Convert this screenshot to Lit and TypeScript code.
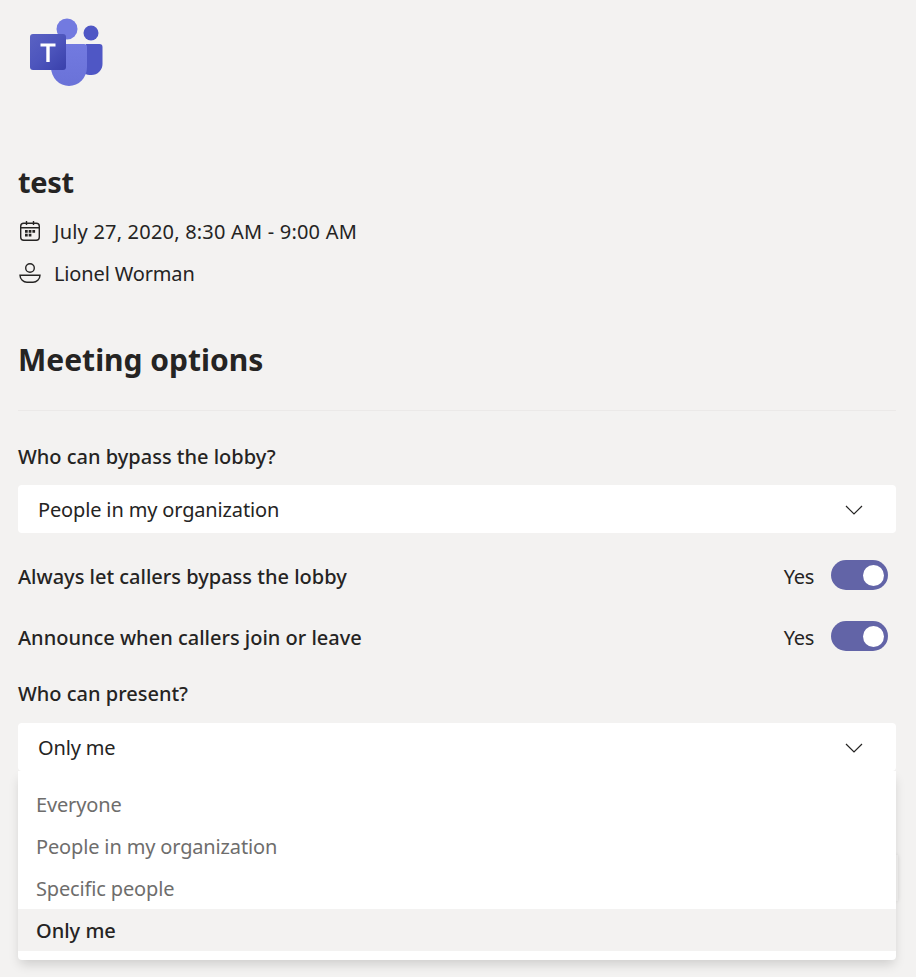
import { LitElement, html, css, svg } from "lit";
import { customElement } from "lit/decorators.js";

const logo = svg`<svg class="logo" width="75" height="70" viewBox="0 0 75 70">
  <defs>
    <linearGradient id="tile" x1="0" y1="0" x2="1" y2="1">
      <stop offset="0" stop-color="#5a62c3" />
      <stop offset="0.5" stop-color="#4d55bd" />
      <stop offset="1" stop-color="#3940ab" />
    </linearGradient>
    <linearGradient id="body" x1="0" y1="0" x2="0" y2="1">
      <stop offset="0" stop-color="#727ae0" />
      <stop offset="1" stop-color="#6a72d8" />
    </linearGradient>
  </defs>
  <circle cx="39" cy="11" r="10.5" fill="#727ae0" />
  <circle cx="63" cy="15" r="7.5" fill="#4f57c5" />
  <path d="M58 26h13.500a3 3 0 0 1 3 3v17a11 11 0 0 1-11 11c-3 0-5-.5-7-1.500z" fill="#4f57c5" />
  <path d="M23 26h33a3 3 0 0 1 3 3v20a18 19 0 0 1-36 0z" fill="url(#body)" />
  <rect x="2" y="16" width="36" height="36" rx="3" fill="url(#tile)" />
  <path d="M12.500 25.500h15v3h-5.800v15.500h-3.400v-15.500h-5.800z" fill="#fff" />
</svg>`;

const calendar = svg`<svg width="22" height="22" viewBox="0 0 22 22" fill="none" stroke="#252423" stroke-width="1.4">
  <rect x="1.700" y="3.200" width="18.600" height="17" rx="3" />
  <path d="M1.700 7.800h18.600M7.500 1v4M14.500 1v4" />
  <path d="M6 10h2.700v2.700h-2.700zM9.700 10h2.700v2.700h-2.700zM13.400 10h2.700v2.700h-2.700zM6 13.800h2.700v2.700h-2.700zM9.700 13.800h2.700v2.700h-2.700z" fill="#252423" stroke="none" />
</svg>`;

const person = svg`<svg width="22" height="22" viewBox="0 0 22 22" fill="none" stroke="#252423" stroke-width="1.4">
  <circle cx="11" cy="6" r="4.300" />
  <path d="M1 13.200h20c0 4-3.500 7-7 7h-6c-3.500 0-7-3-7-7z" />
</svg>`;

const chevron = svg`<svg width="18" height="10" viewBox="0 0 18 10" fill="none" stroke="#252423" stroke-width="1.2">
  <path d="M1 1l8 8 8-8" />
</svg>`;

@customElement("app-root")
export class AppRoot extends LitElement {
  static styles = css`
    :host {
      display: block;
      position: relative;
      height: 977px;
      overflow: hidden;
      background: #f3f2f1;
      color: #252423;
      font-family: "Noto Sans", "Open Sans", sans-serif;
      font-size: 20px;
      letter-spacing: -0.15px;
    }
    .page {
      display: flex;
      flex-direction: column;
      padding: 18px 20px 0 18px;
    }
    .logo {
      display: block;
      margin-left: 10px;
    }
    h1 {
      margin: 74px 0 0;
      font-size: 29px;
      line-height: 40px;
      font-weight: 700;
      letter-spacing: -0.3px;
    }
    .meta {
      display: flex;
      align-items: center;
      gap: 13px;
      height: 42px;
      padding-left: 1px;
    }
    .meta.first {
      margin-top: 8px;
    }
    .date {
      letter-spacing: 0.2px;
    }
    h2 {
      margin: 45px 0 0;
      font-size: 30px;
      line-height: 42px;
      font-weight: 700;
      letter-spacing: 0;
    }
    .divider {
      height: 1px;
      margin-top: 29px;
      background: #ebe9e8;
    }
    .label {
      font-weight: 500;
      line-height: 28px;
      letter-spacing: 0;
    }
    .label.lobby {
      margin-top: 32px;
    }
    .label.present {
      margin-top: 14px;
    }
    .select {
      position: relative;
      z-index: 1;
      display: flex;
      align-items: center;
      justify-content: space-between;
      height: 48px;
      padding: 0 33px 0 20px;
      background: #fff;
      border-radius: 4px;
    }
    .select span {
      padding-top: 1px;
    }
    .select svg {
      margin-top: 2px;
    }
    .select.first {
      margin-top: 14px;
      margin-bottom: 12px;
    }
    .select.open {
      margin-top: 15px;
    }
    .row {
      display: flex;
      align-items: center;
      justify-content: space-between;
      height: 60px;
      font-weight: 500;
      letter-spacing: 0;
    }
    .row + .row {
      margin-top: 1px;
    }
    .row span {
      padding-top: 2px;
    }
    .state {
      display: flex;
      align-items: center;
      gap: 17px;
      padding-right: 8px;
      font-weight: 400;
      letter-spacing: -0.35px;
    }
    .state span {
      padding-top: 2px;
    }
    .toggle {
      display: flex;
      align-items: center;
      justify-content: flex-end;
      width: 57px;
      height: 30px;
      padding-right: 4px;
      box-sizing: border-box;
      border-radius: 15px;
      background: #6264a7;
    }
    .knob {
      width: 21px;
      height: 21px;
      border-radius: 50%;
      background: #fff;
    }
    /* the save button peeking out behind the open menu */
    .behind {
      position: absolute;
      right: 18px;
      top: 855px;
      width: 40px;
      height: 46px;
      box-shadow: 0 0 4px rgba(0, 0, 0, 0.1);
    }
    .menu {
      position: absolute;
      left: 18px;
      right: 20px;
      top: 771px;
      height: 189px;
      box-sizing: border-box;
      padding-top: 12px;
      background: #fff;
      border-radius: 0 0 4px 4px;
      box-shadow: 0 6px 12px -2px rgba(0, 0, 0, 0.16);
      color: #6e6d6c;
    }
    .item {
      display: flex;
      align-items: center;
      height: 42px;
      padding-left: 18px;
    }
    .item.active {
      background: #f3f2f1;
      color: #252423;
      font-weight: 500;
      letter-spacing: 0;
    }
  `;

  render() {
    return html`
      <div class="page">
        ${logo}
        <h1>test</h1>
        <div class="meta first">${calendar}<span class="date">July 27, 2020, 8:30 AM - 9:00 AM</span></div>
        <div class="meta">${person}<span>Lionel Worman</span></div>
        <h2>Meeting options</h2>
        <div class="divider"></div>
        <div class="label lobby">Who can bypass the lobby?</div>
        <div class="select first"><span>People in my organization</span>${chevron}</div>
        ${["Always let callers bypass the lobby", "Announce when callers join or leave"].map(
          (text) => html`<div class="row">
            <span>${text}</span>
            <div class="state"><span>Yes</span><div class="toggle"><div class="knob"></div></div></div>
          </div>`
        )}
        <div class="label present">Who can present?</div>
        <div class="select open"><span>Only me</span>${chevron}</div>
      </div>
      <div class="behind"></div>
      <div class="menu">
        ${["Everyone", "People in my organization", "Specific people"].map(
          (text) => html`<div class="item">${text}</div>`
        )}
        <div class="item active">Only me</div>
      </div>
    `;
  }
}
